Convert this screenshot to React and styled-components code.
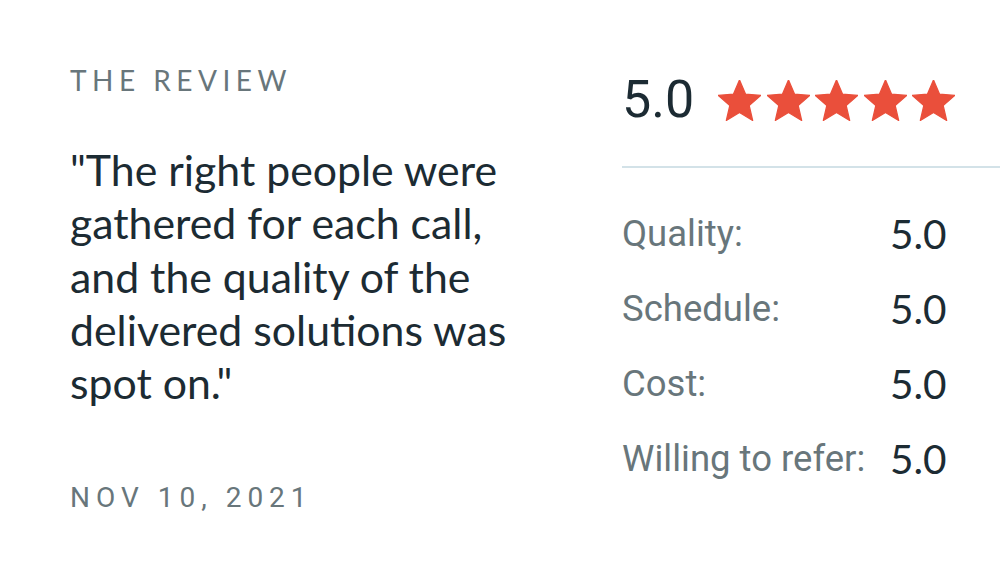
import React from "react";
import styled, { createGlobalStyle } from "styled-components";

const GlobalStyle = createGlobalStyle`
  html, body {
    margin: 0;
    padding: 0;
    background: #ffffff;
  }
  body {
    font-family: "Roboto", "Liberation Sans", sans-serif;
    overflow: hidden;
  }
`;

const Page = styled.section`
  display: grid;
  grid-template-columns: 552px 1fr;
  padding: 60px 0 0 70px;
  height: 567px;
  box-sizing: border-box;
`;

const ReviewCol = styled.div`
  display: flex;
  flex-direction: column;
`;

const Eyebrow = styled.div`
  font-family: ${(p) => (p.$lato ? '"Lato"' : '"Roboto"')}, sans-serif;
  font-size: 28px;
  line-height: 40px;
  letter-spacing: ${(p) => (p.$lato ? "5.5px" : "6px")};
  color: #68767b;
  text-transform: uppercase;
`;

const Quote = styled.p`
  margin: 43px 0 0;
  font-family: "Lato", sans-serif;
  font-size: 42.8px;
  line-height: 53.3px;
  color: #1c2b33;
  width: 450px;
`;

const DateLine = styled(Eyebrow)`
  margin-top: 69px;
`;

const ScoreCol = styled.div`
  display: flex;
  flex-direction: column;
`;

const Overall = styled.div`
  display: flex;
  align-items: center;
  gap: 24px;
  height: 80px;
`;

const BigScore = styled.span`
  font-size: 52px;
  color: #1c2b33;
  line-height: 1;
`;

const Stars = styled.div`
  display: flex;
  gap: 5.5px;
`;

const Divider = styled.hr`
  border: 0;
  border-top: 2px solid #d3e2e8;
  margin: 26px 0 28px;
`;

const Rows = styled.dl`
  display: grid;
  grid-template-columns: 268px auto;
  margin: 0;
`;

const Label = styled.dt`
  font-size: 36.5px;
  line-height: 75px;
  color: #68767b;
`;

const Value = styled.dd`
  margin: 0;
  font-family: "Lato", sans-serif;
  font-size: 40.5px;
  line-height: 75px;
  color: #1c2b33;
`;

const Star = () => (
  <svg width="43" height="41" viewBox="2 2 20 19.27">
    <path
      fill="#ea4f3b"
      stroke="#ea4f3b"
      strokeWidth="0.6"
      strokeLinejoin="round"
      d="M12 17.27L18.18 21l-1.64-7.03L22 9.24l-7.19-.61L12 2 9.19 8.63 2 9.24l5.46 4.73L5.82 21z"
    />
  </svg>
);

const ratings = [
  ["Quality:", "5.0"],
  ["Schedule:", "5.0"],
  ["Cost:", "5.0"],
  ["Willing to refer:", "5.0"],
];

export default function App() {
  return (
    <>
      <GlobalStyle />
      <Page>
        <ReviewCol>
          <Eyebrow $lato>The Review</Eyebrow>
          <Quote>
            "The right people were gathered for each call, and the quality of
            the delivered solutions was spot on."
          </Quote>
          <DateLine>Nov 10, 2021</DateLine>
        </ReviewCol>
        <ScoreCol>
          <Overall>
            <BigScore>5.0</BigScore>
            <Stars>
              {[0, 1, 2, 3, 4].map((i) => (
                <Star key={i} />
              ))}
            </Stars>
          </Overall>
          <Divider />
          <Rows>
            {ratings.map(([label, value]) => (
              <React.Fragment key={label}>
                <Label>{label}</Label>
                <Value>{value}</Value>
              </React.Fragment>
            ))}
          </Rows>
        </ScoreCol>
      </Page>
    </>
  );
}
